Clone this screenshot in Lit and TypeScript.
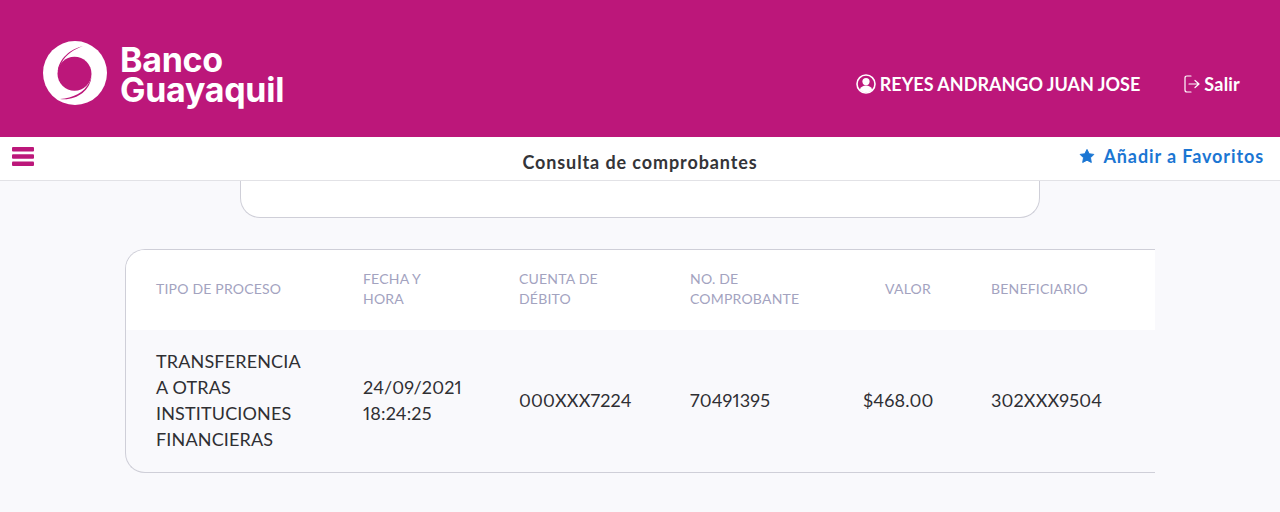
import { css, html, LitElement } from "lit";
import { customElement } from "lit/decorators.js";

const columns = [
  { head: "TIPO DE PROCESO", value: "TRANSFERENCIA A OTRAS INSTITUCIONES FINANCIERAS" },
  { head: "FECHA Y HORA", value: "24/09/2021 18:24:25" },
  { head: "CUENTA DE DÉBITO", value: "000XXX7224" },
  { head: "NO. DE COMPROBANTE", value: "70491395" },
  { head: "VALOR", value: "$468.00", right: true },
  { head: "BENEFICIARIO", value: "302XXX9504" },
];

@customElement("app-root")
export class AppRoot extends LitElement {
  static styles = css`
    :host {
      display: block;
      height: 512px;
      overflow: hidden;
      background: #f9f9fc;
      font-family: "Lato", "Open Sans", sans-serif;
      color: #2f2f33;
    }

    .header {
      display: flex;
      align-items: flex-start;
      justify-content: space-between;
      height: 137px;
      box-sizing: border-box;
      padding: 41px 40px 0 43px;
      background: #bc177a;
      color: #fff;
    }

    .logo {
      display: flex;
      gap: 13px;
    }

    .logo-name {
      margin-top: 4px;
      font-family: "Inter", sans-serif;
      font-size: 34px;
      font-weight: 700;
      line-height: 30px;
      letter-spacing: -0.3px;
    }

    .account {
      display: flex;
      align-items: center;
      gap: 44px;
      margin-top: 31px;
      font-size: 18px;
      font-weight: 700;
      line-height: 24px;
    }

    .account span {
      display: flex;
      align-items: center;
      gap: 4px;
    }

    .salir {
      letter-spacing: 0.2px;
    }

    .toolbar {
      display: grid;
      grid-template-columns: 1fr auto 1fr;
      height: 44px;
      box-sizing: border-box;
      background: #fff;
      border-bottom: 1px solid #e2e2e6;
    }

    .menu {
      margin: 10px 0 0 12px;
    }

    .title {
      margin-top: 14px;
      font-size: 18px;
      font-weight: 700;
      line-height: 22px;
      letter-spacing: 0.9px;
      color: #343438;
    }

    .favorite {
      display: flex;
      justify-self: end;
      align-items: center;
      gap: 8px;
      height: 22px;
      margin: 8px 16px 0 0;
      font-size: 18px;
      font-weight: 700;
      letter-spacing: 0.9px;
      color: #1b76d3;
    }

    .filter-card {
      width: 800px;
      height: 37px;
      box-sizing: border-box;
      margin: 0 auto;
      background: #fff;
      border: 1px solid #cfcfd8;
      border-top: 0;
      border-radius: 0 0 20px 20px;
    }

    .results {
      width: 1030px;
      box-sizing: border-box;
      margin: 31px 0 0 125px;
      overflow: hidden;
      border: 1px solid #cfcfd8;
      border-right: 0;
      border-radius: 20px 0 0 20px;
    }

    .row {
      display: grid;
      grid-template-columns: 207px 156px 171px 173px 128px 194px;
      align-items: center;
    }

    .head {
      height: 80px;
      box-sizing: border-box;
      padding-bottom: 2px;
      background: #fff;
      font-size: 14px;
      line-height: 20px;
      letter-spacing: 0.2px;
      color: #a3a3bf;
    }

    .body {
      height: 142px;
      box-sizing: border-box;
      padding-bottom: 3px;
      font-size: 18px;
      line-height: 26px;
      letter-spacing: 0.15px;
      font-variant-numeric: proportional-nums;
      color: #2f2f33;
    }

    .cell {
      padding: 0 30px;
    }

    .right {
      text-align: right;
    }
  `;

  render() {
    return html`
      <div class="header">
        <div class="logo">
          <svg width="64" height="64" viewBox="0 0 64 64">
            <circle cx="32" cy="32" r="32" fill="#fff" />
            <circle cx="31.5" cy="32.7" r="17" fill="#bc177a" />
            <path d="M14.8 30C16 18 27 8 40 5C32 8 23 13 18.5 22Z" fill="#bc177a" />
            <path d="M48.4 36C47 50 33 60 17 58C30 57 41 52 46.5 41Z" fill="#bc177a" />
          </svg>
          <div class="logo-name">Banco<br />Guayaquil</div>
        </div>
        <div class="account">
          <span>
            <svg width="20" height="20" viewBox="0 0 20 20">
              <circle cx="10" cy="10" r="9" fill="#bc177a" stroke="#fff" stroke-width="1.6" />
              <circle cx="10" cy="7.6" r="3.6" fill="#fff" />
              <path d="M3.8 15.6C5 12.6 7.4 11.6 10 11.6S15 12.6 16.2 15.6C14.6 17.6 12.4 18.4 10 18.4S5.4 17.6 3.8 15.6Z" fill="#fff" />
            </svg>
            REYES ANDRANGO JUAN JOSE
          </span>
          <span class="salir">
            <svg width="16" height="18" viewBox="0 0 16 18" fill="none" stroke="#fff" stroke-width="1.2" stroke-linecap="round" stroke-linejoin="round">
              <path d="M7 1H3Q1 1 1 3V15Q1 17 3 17H7" />
              <path d="M5 9H15M11 5.5L15 9L11 12.5" />
            </svg>
            Salir
          </span>
        </div>
      </div>
      <div class="toolbar">
        <svg class="menu" width="22" height="19" viewBox="0 0 22 19" fill="#bc177a">
          <rect width="22" height="4.5" rx="1" />
          <rect y="7.25" width="22" height="4.5" rx="1" />
          <rect y="14.5" width="22" height="4.5" rx="1" />
        </svg>
        <div class="title">Consulta de comprobantes</div>
        <div class="favorite">
          <svg width="16" height="16" viewBox="0 0 17 16" fill="#1b76d3" stroke="#1b76d3" stroke-width="1" stroke-linejoin="round">
            <path d="M8.5 1L10.8 5.6L15.8 6.3L12.2 9.9L13.1 14.9L8.5 12.5L3.9 14.9L4.8 9.9L1.2 6.3L6.2 5.6Z" />
          </svg>
          Añadir a Favoritos
        </div>
      </div>
      <div class="filter-card"></div>
      <div class="results">
        <div class="row head">
          ${columns.map(
            (c) => html`<div class="cell ${c.right ? "right" : ""}">${c.head}</div>`,
          )}
        </div>
        <div class="row body">
          ${columns.map(
            (c) => html`<div class="cell ${c.right ? "right" : ""}">${c.value}</div>`,
          )}
        </div>
      </div>
    `;
  }
}
